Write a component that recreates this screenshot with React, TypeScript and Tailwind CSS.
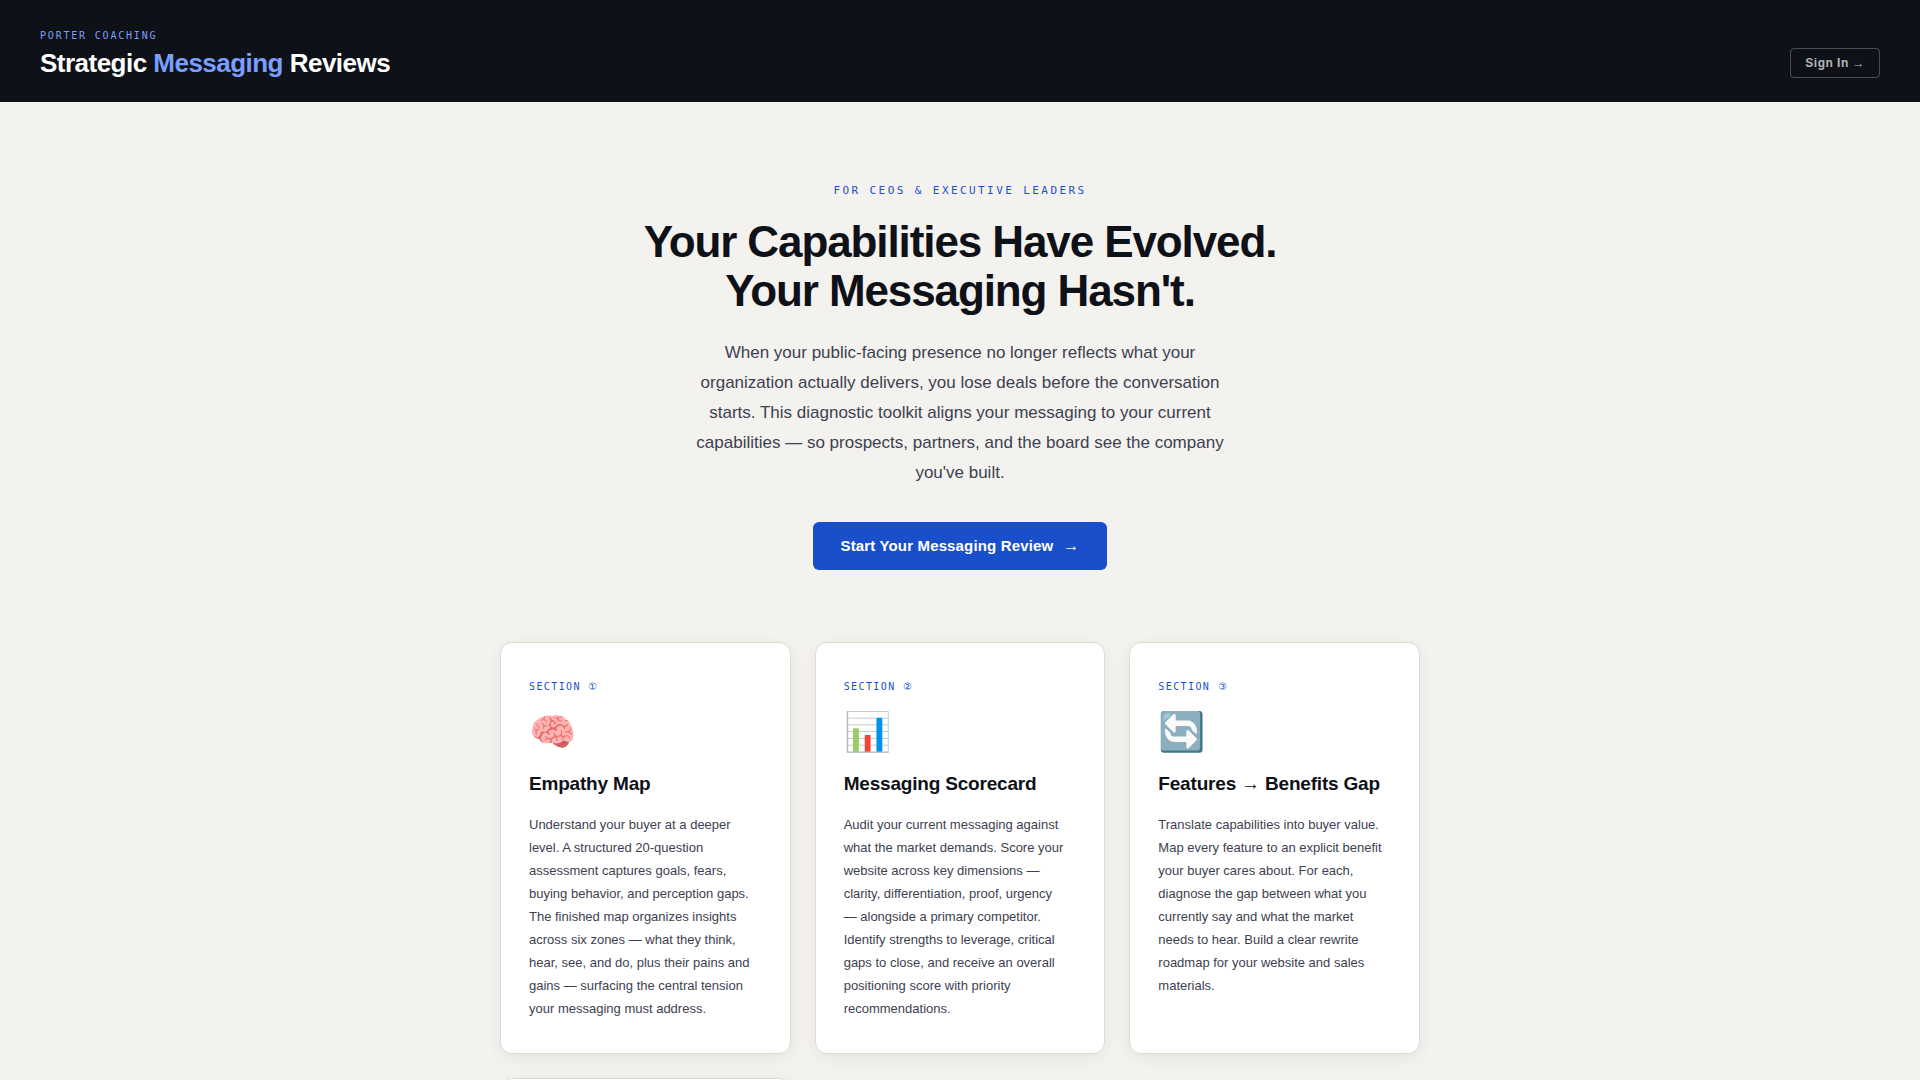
const sections = [
  {
    number: "①",
    icon: "🧠",
    title: "Empathy Map",
    text: "Understand your buyer at a deeper level. A structured 20-question assessment captures goals, fears, buying behavior, and perception gaps. The finished map organizes insights across six zones — what they think, hear, see, and do, plus their pains and gains — surfacing the central tension your messaging must address.",
  },
  {
    number: "②",
    icon: "📊",
    title: "Messaging Scorecard",
    text: "Audit your current messaging against what the market demands. Score your website across key dimensions — clarity, differentiation, proof, urgency — alongside a primary competitor. Identify strengths to leverage, critical gaps to close, and receive an overall positioning score with priority recommendations.",
  },
  {
    number: "③",
    icon: "🔄",
    title: "Features → Benefits Gap",
    text: "Translate capabilities into buyer value. Map every feature to an explicit benefit your buyer cares about. For each, diagnose the gap between what you currently say and what the market needs to hear. Build a clear rewrite roadmap for your website and sales materials.",
  },
];

const card =
  "rounded-xl border border-[#dddad0] bg-white px-7 pt-8 pb-[33px] shadow-[0_4px_16px_rgba(0,0,0,0.06)]";
const mono = "font-['DejaVu_Sans_Mono',monospace] uppercase";

function Header() {
  return (
    <header className="flex items-end justify-between bg-[#0e1117] px-10 pt-7 pb-6">
      <div>
        <p className={`${mono} mb-1 text-[10px] leading-4 tracking-[0.18em] text-[#7b9fff]`}>
          Porter Coaching
        </p>
        <p className="text-[26px] leading-[30px] font-bold tracking-[-0.02em] text-white">
          Strategic <span className="text-[#7b9fff]">Messaging</span> Reviews
        </p>
      </div>
      <button className="rounded border border-white/25 px-3.5 text-xs leading-7 font-bold tracking-[0.04em] text-white/70">
        Sign In →
      </button>
    </header>
  );
}

function Hero() {
  return (
    <section className="flex flex-col items-center px-10 pt-20 pb-18 text-center">
      <p className={`${mono} mb-[17px] text-[11px] leading-[18px] tracking-[0.22em] text-[#1a4fcc]`}>
        For CEOs &amp; Executive Leaders
      </p>
      <h1 className="mb-[23px] text-[44px] leading-[49px] font-bold tracking-[-0.025em]">
        Your Capabilities Have Evolved.
        <br />
        Your Messaging Hasn't.
      </h1>
      <p className="mb-[34px] max-w-[560px] text-[17px] leading-[30px] text-[#3d4150]">
        When your public-facing presence no longer reflects what your
        organization actually delivers, you lose deals before the conversation
        starts. This diagnostic toolkit aligns your messaging to your current
        capabilities — so prospects, partners, and the board see the company
        you've built.
      </p>
      <button className="flex items-center gap-2.5 rounded-md bg-[#1a4fcc] px-7 text-[15px] leading-[48px] font-bold tracking-[0.01em] text-white">
        Start Your Messaging Review <span className="text-base leading-none">→</span>
      </button>
    </section>
  );
}

export default function App() {
  return (
    <div className="min-h-screen bg-[#f4f2ee] font-['Liberation_Sans',Arial,sans-serif] text-[#0e1117]">
      <Header />
      <main>
        <Hero />
        <section className="mx-auto grid max-w-[920px] grid-cols-3 gap-6 pb-20">
          {sections.map((section) => (
            <article key={section.title} className={card}>
              <p className={`${mono} mb-3 text-[10px] leading-6 tracking-[0.14em] text-[#1a4fcc]`}>
                Section {section.number}
              </p>
              <div className="mb-[18px] text-[38px] leading-[42px]">{section.icon}</div>
              <h2 className="mb-4 text-[19px] leading-[26px] font-bold tracking-[-0.01em]">
                {section.title}
              </h2>
              <p className="max-w-56 text-[13px] leading-[23px] text-[#3d4150]">{section.text}</p>
            </article>
          ))}
          <article className={card} />
        </section>
      </main>
    </div>
  );
}
